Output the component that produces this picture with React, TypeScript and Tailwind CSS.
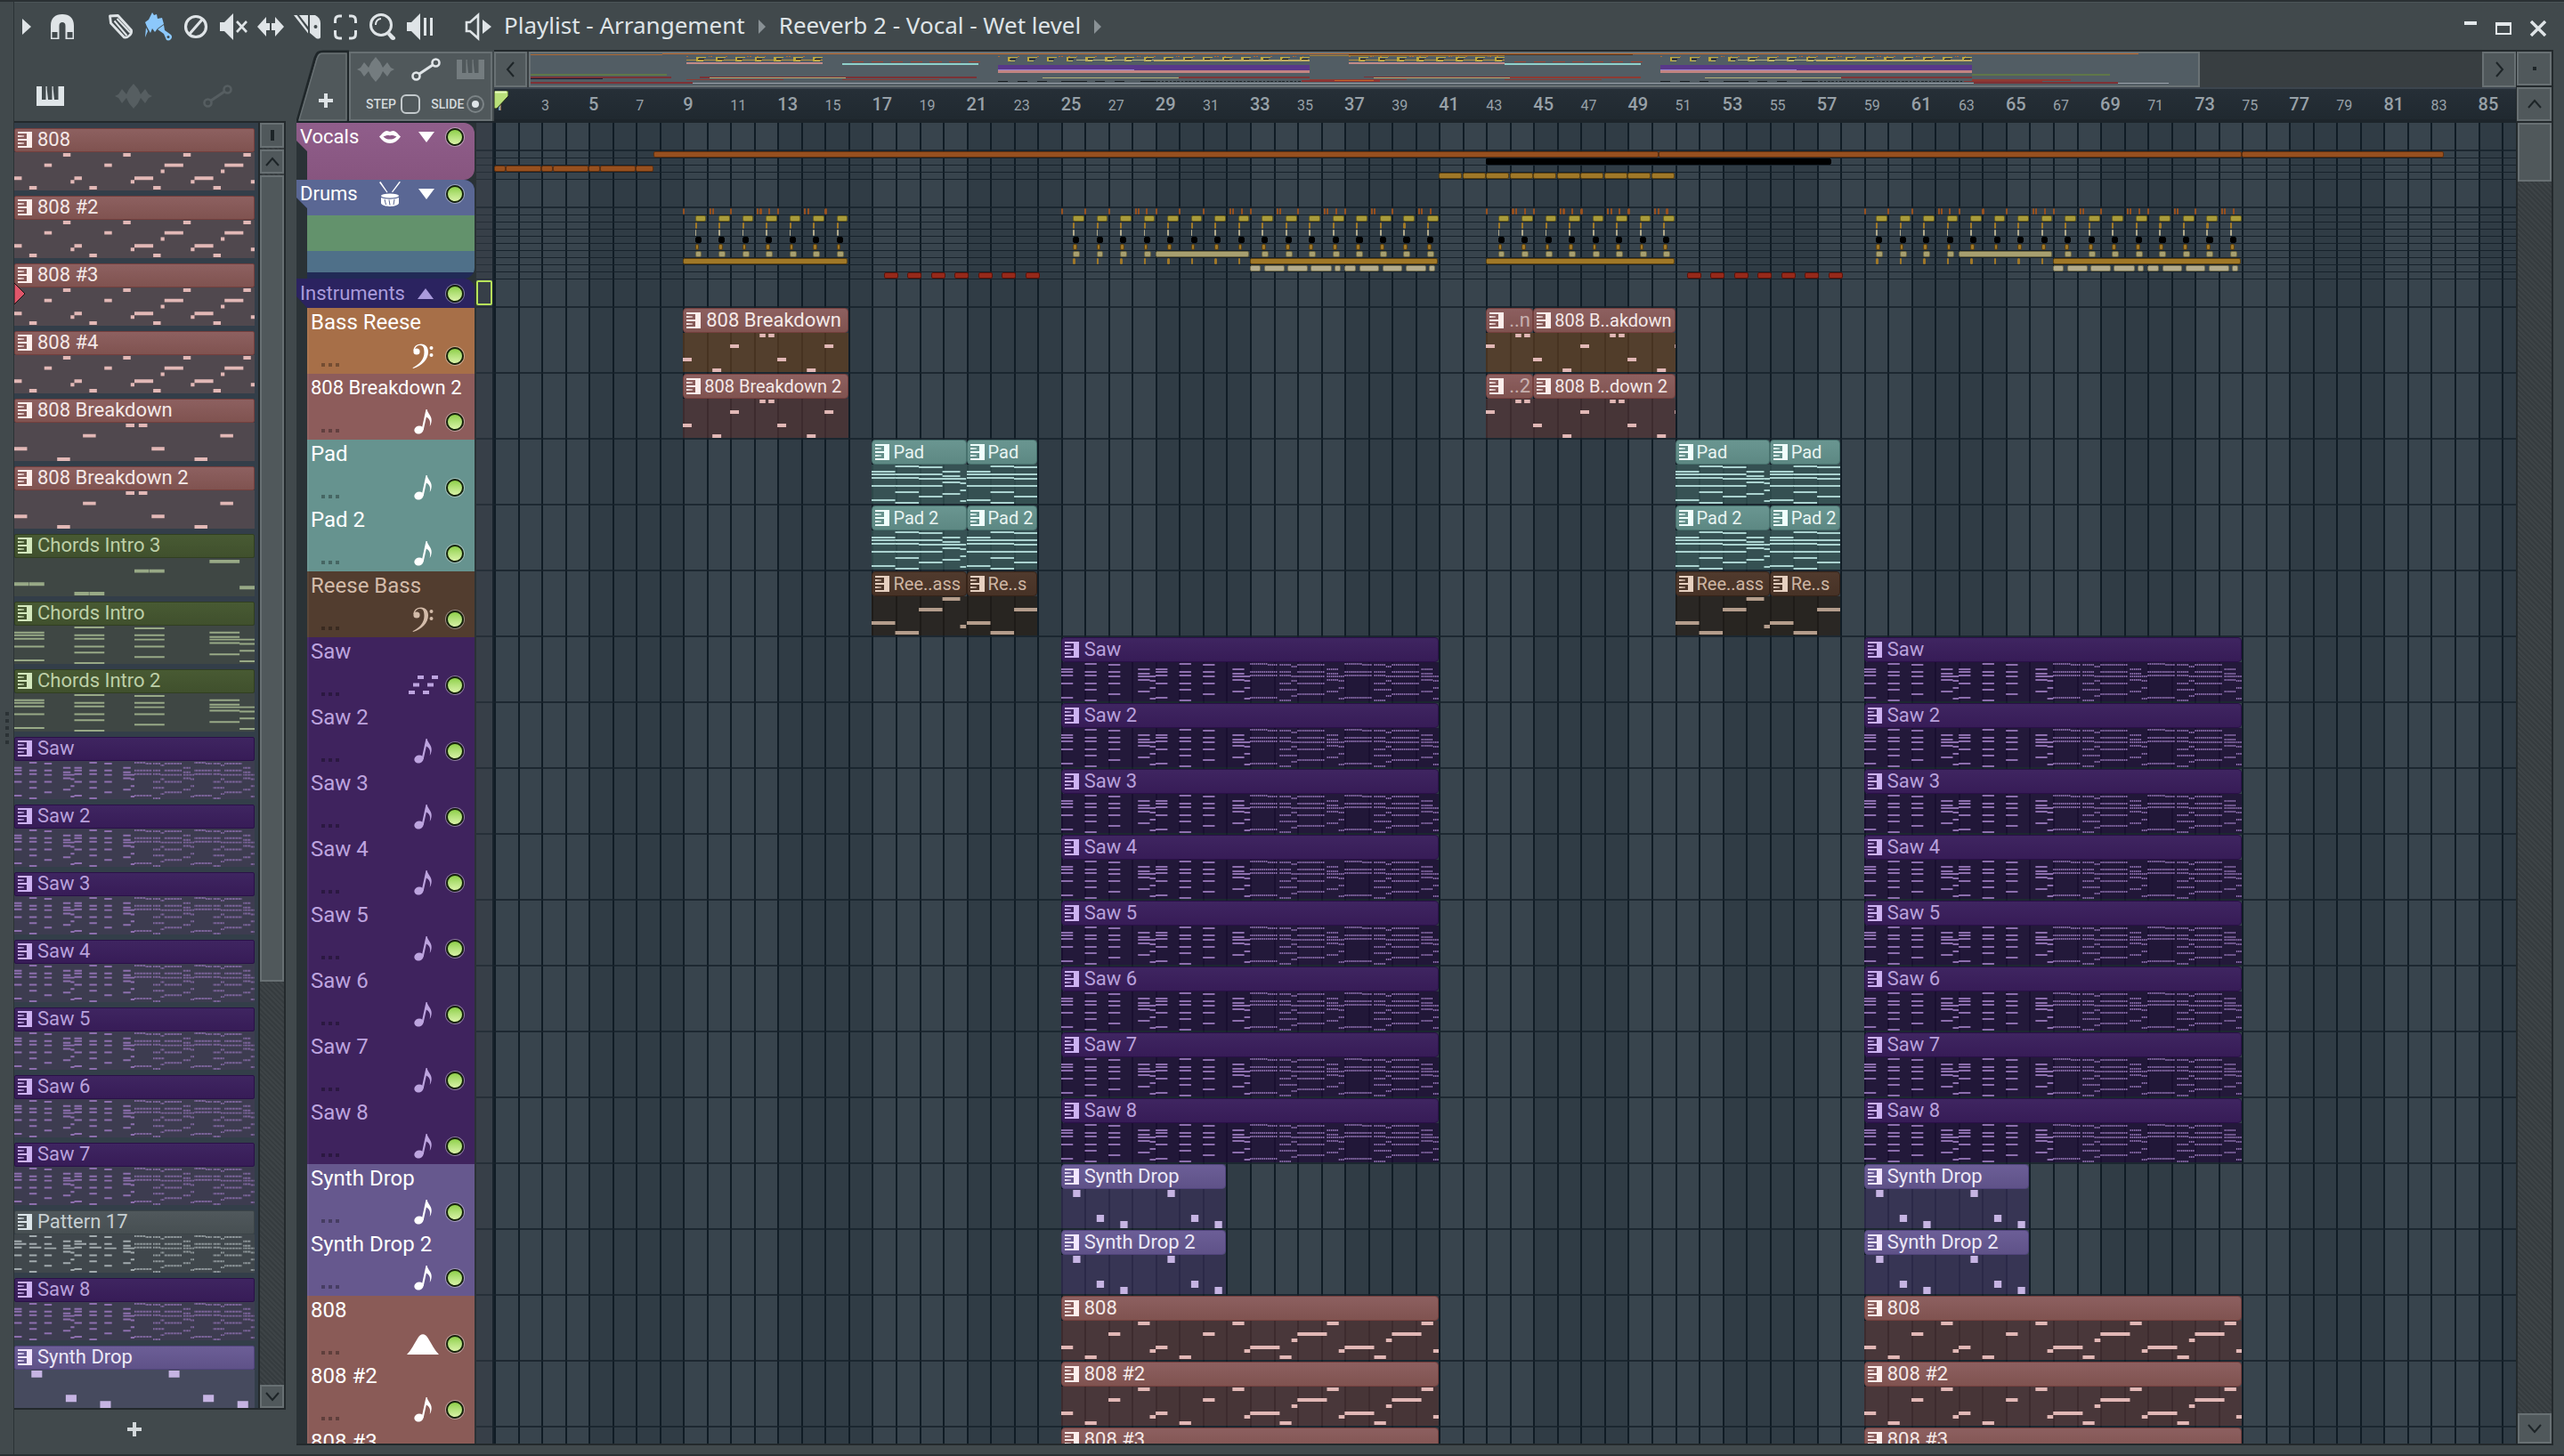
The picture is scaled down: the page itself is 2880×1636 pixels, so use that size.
import React from "react";

/* ---------- note patterns: [start, length, y, height] in quarter bars and pixels ---------- */
type Note = [number, number, number, number];

const BODY = 44;
const TOTAL_BARS = 85.6;

const at = (starts: [number, number][], y: number, h: number): Note[] =>
  starts.map(([s, l]) => [s, l, y, h]);

const bass808: Note[] = [
  ...at([[13, 2], [29, 2], [45, 2], [61, 2]], 1, 4),
  ...at([[8, 2], [24, 2], [40, 5], [56, 5]], 13, 4),
  ...at([[39, 1], [55, 1]], 20, 4),
  ...at([[0, 2], [16, 2], [32, 5], [48, 5]], 28, 4),
  ...at([[15, 1], [31, 1], [47, 1], [63, 1]], 32, 4),
  ...at([[4, 2], [20, 2], [37, 2], [53, 2]], 39, 4),
];

const breakdown: Note[] = [
  ...at([[13, 1], [14.5, 1]], 1, 4),
  ...at([[8, 1.5], [24, 1.5]], 13, 4),
  ...at([[0, 1.5], [16, 1.5]], 28, 4),
  ...at([[5, 1.5], [21, 1.5]], 40, 4),
];

const chordA = [7, 10, 14, 23, 39];
const chordB = [1, 10, 14, 23, 30, 42];
const chordC = [2, 10, 15, 23, 35];
const chordD = [7, 12, 15, 19, 32];
const chordE = [15, 20, 28, 40];

const chord = (ys: number[], s: number, l: number, h = 2): Note[] =>
  ys.map((y) => [s, l, y, h]);

const dashes = (ys: number[], s: number, l: number): Note[] => {
  const out: Note[] = [];
  for (const y of ys)
    for (let x = s; x < s + l - 0.1; x += 0.333) out.push([x, 0.22, y, 2]);
  return out;
};

const pad: Note[] = [
  ...chord(chordA, 0, 4),
  ...chord(chordB, 4, 4),
  ...chord(chordC, 8, 4),
  ...chord(chordD, 12, 3),
  ...chord(chordE, 15, 1),
];

const chords: Note[] = [
  ...chord(chordA, 0, 2),
  ...chord(chordB, 4, 2),
  ...chord(chordC, 8, 2),
  ...chord(chordD, 13, 2),
  ...chord(chordE, 15, 1),
];

const chordRoots: Note[] = [
  [0, 0.97, 28, 4], [1, 1, 28, 4], [4, 0.97, 39, 4], [5, 1, 39, 4],
  [8, 0.97, 13, 4], [9, 1, 13, 4], [13, 2, 2, 4], [15, 1, 32, 4],
];

const reese: Note[] = [
  [0, 4, 28, 4], [4, 4, 39, 4], [8, 4, 13, 4], [12, 3, 1, 4], [15, 1, 32, 4],
];

const saw: Note[] = [
  ...[0, 16].flatMap((o) => [
    ...chord(chordA, o, 2),
    ...chord(chordB, o + 4, 2),
    ...chord(chordC, o + 8, 2),
    ...chord(chordD, o + 13, 2),
    ...chord(chordE, o + 15, 1),
  ]),
  ...[32, 48].flatMap((o) => [
    ...dashes([1], o, 3),
    ...dashes([2], o + 3, 1.5),
    ...dashes([10, 14, 39], o, 4.5),
    ...dashes([2, 10, 14, 23, 42], o + 5, 2),
    ...dashes([30], o + 5, 3),
    ...dashes([4, 15, 20, 37], o + 7, 1),
    ...dashes([2, 10, 15, 23, 35], o + 8, 4.5),
    ...dashes(chordD, o + 13, 2),
    ...dashes(chordE, o + 15, 1),
  ]),
];

const pattern17: Note[] = [
  ...saw,
  [0, 3.2, 10, 2], [16, 3.2, 10, 2], [4, 3.2, 14, 2], [20, 3.2, 14, 2], [8, 3.2, 15, 2], [24, 3.2, 15, 2],
];

const synth: Note[] = [
  ...at([[2, 1.25], [18, 1.25]], 1, 8),
  ...at([[6, 1.25], [22, 1.25]], 29, 8),
  ...at([[10, 1.25], [26, 1.25]], 36, 8),
];

const toPath = (notes: Note[]) =>
  notes.map(([x, w, y, h]) => `M${x.toFixed(2)} ${y}h${w}v${h}h-${w}z`).join("");

const P = {
  bass808: toPath(bass808),
  breakdown: toPath(breakdown),
  pad: toPath(pad),
  chords: toPath(chords),
  roots: toPath(chordRoots),
  reese: toPath(reese),
  saw: toPath(saw),
  p17: toPath(pattern17),
  synth: toPath(synth),
};

function Notes({ d, from = 0, span, className }: { d: string; from?: number; span: number; className: string }) {
  return (
    <svg className={`block h-full w-full ${className}`} viewBox={`${from} 0 ${span} ${BODY}`} preserveAspectRatio="none" aria-hidden="true">
      <path d={d} fill="currentColor" />
    </svg>
  );
}

/* ---------- icons ---------- */
const Svg = ({ box, className, children }: { box: string; className: string; children: React.ReactNode }) => (
  <svg viewBox={box} className={`shrink-0 ${className}`} fill="currentColor" aria-hidden="true">
    {children}
  </svg>
);

const ClipIcon = ({ className }: { className: string }) => (
  <Svg box="0 0 16 18" className={`h-[18px] w-4 ${className}`}>
    <path d="M0 0h16v18H0v-2h10v-6H0V8h10V2H0z" />
    <path d="M0 4l7 .6v1L0 6zM0 12l7 .6v1L0 14z" />
  </Svg>
);

const PianoIcon = ({ className }: { className: string }) => (
  <Svg box="0 0 31 22" className={className}>
    <path d="M0 0h6v15h4.500V0h1.200v3L13 15h4.500V0h1.200v3L20 15h4.500V0H31v22H0z" />
  </Svg>
);

const WaveIcon = ({ className }: { className: string }) => (
  <Svg box="0 0 42 28" className={className}>
    <path d="M0 14l4-2 4-6 5 6 3-6L21 0l5 6 3 6 5-6 4 6 4 2-4 2-4 6-5-6-3 6-5 6-5-6-3-6-5 6-4-6z" />
  </Svg>
);

const LinkIcon = ({ className }: { className: string }) => (
  <Svg box="0 0 33 26" className={className}>
    <g fill="none" stroke="currentColor" strokeWidth="2.600">
      <circle cx="5.500" cy="20.500" r="4" />
      <circle cx="27.500" cy="5.500" r="4" />
      <path d="M9 18L24 8" strokeWidth="3.200" />
    </g>
  </Svg>
);

const NoteIcon = () => (
  <Svg box="0 0 20 28" className="h-7 w-5">
    <ellipse cx="5.500" cy="23" rx="5.200" ry="4.400" transform="rotate(-20 5.500 23)" />
    <path d="M8.500 23L13.500 0h1.200c.2 4 5.300 7 5 12.500-.1 3-1 5-2 6.500 1-4.500.5-8-3.800-10.500L10.700 23z" />
  </Svg>
);

const ClefIcon = () => (
  <Svg box="0 0 24 28" className="h-7 w-6">
    <circle cx="5" cy="9" r="3.600" />
    <path d="M1.400 8C1.500 3.500 5 .5 10 .5c5 0 8 3.500 8 9C18 18 11 25 1 28l-.5-.8C8 23.500 13.500 18 13.500 10 13.500 5 12.500 2 9 2 6 2 3.200 4 3 7.500z" />
    <circle cx="21.500" cy="5" r="2" />
    <circle cx="21.500" cy="13" r="2" />
  </Svg>
);

const StepsIcon = () => (
  <Svg box="0 0 33 22" className="h-[22px] w-[33px]">
    <path d="M10 0h7v4h-7zM26 0h7v4h-7zM5 8.500h7v4H5zM21 8.500h7v4h-7zM0 17h7v4H0zM16 17h7v4h-7z" />
  </Svg>
);

const HillIcon = () => (
  <Svg box="0 0 36 23" className="h-[23px] w-9">
    <path d="M0 23C5 18 8 11 12 5c3-6.500 9-6.500 12 0 4 6 7 13 12 18z" />
  </Svg>
);

const LipsIcon = () => (
  <Svg box="0 0 24 14" className="h-[14px] w-6">
    <path fillRule="evenodd" d="M0 6.500C3 4 5 0 8.500 0 10 0 11 1 12 1s2-1 3.500-1C19 0 21 4 24 6.500 21 11 17 14 12 14S3 11 0 6.500zM4.500 6.500C7 9 9 9.500 12 9.500s5-.5 7.500-3C17 5.500 14 4.500 12 5.500 10 4.500 7 5.500 4.500 6.500z" />
  </Svg>
);

const DrumIcon = () => (
  <Svg box="0 0 24 28" className="h-7 w-6">
    <path d="M0 1l1.500-1 8 12-1 .6zM24 .5L22.500 0 14 11.500l1 .7z" />
    <ellipse cx="12" cy="16" rx="10" ry="2.400" />
    <path d="M2 18c5 2.300 15 2.300 20 0v6.500C20 29 4 29 2 24.500z" />
    <path d="M6 20l1.500 6M11 20.500l1 6M17 20l-1 6" stroke="#5a6691" strokeWidth="1" />
  </Svg>
);

const tools: { name: string; on?: boolean; art: React.ReactNode }[] = [
  { name: "Draw", art: <g fill="none" stroke="currentColor" strokeWidth="2.800" strokeLinejoin="round"><path d="M3.500 4l9-.5L27.500 20c1 4-4 9-8 8L4.500 12z" /><path d="M8.500 9.500L22.500 26M11.500 7L26 22.500" strokeWidth="2" /></g> },
  { name: "Paint", on: true, art: <><path d="M9 0L5 8 1 11l2 5 4 7 2-5 3 4 3-4 7-5-2-7-5 1-1-5-3 1z" /><path d="M2 17l-1 11 3-7z" /><path d="M15 19l7-5 1 6 7 5c3 3-1 8-5 6l-3-7z" /><circle cx="27" cy="27.500" r="1.500" fill="#41494c" /></> },
  { name: "Delete", art: <g fill="none" stroke="currentColor" strokeWidth="3.200"><circle cx="16" cy="16" r="11.500" /><path d="M9 24L23 8" /></g> },
  { name: "Mute", art: <><path d="M1 11h5L16 1v30L6 21H1z" /><path d="M20 10l11 12M31 10L20 22" stroke="currentColor" strokeWidth="2.600" /></> },
  { name: "Slip", art: <path d="M1 16L11 5v7h10V5l10 11-10 11v-7H11v7zM15 12v8h2v-8z" fillRule="evenodd" /> },
  { name: "Slice", art: <path fillRule="evenodd" d="M0 3h3.500L16 20v3.500zM6 3h10v13zM18 3h6c4 2 6 5 6 9v16c-1 2-4 2-6 0l-6-5zM24.500 14a2 2 0 100 4 2 2 0 000-4z" /> },
  { name: "Select", art: <path fill="none" stroke="currentColor" strokeWidth="3" d="M12 4H9c-3 0-4.500 2-4.500 5v3M20 4h3c3 0 4.500 2 4.500 5v3M12 29H9c-3 0-4.500-2-4.500-5v-4M20 29h3c3 0 4.500-2 4.500-5v-4" /> },
  { name: "Zoom", art: <><g fill="none" stroke="currentColor"><circle cx="14" cy="14" r="11.500" strokeWidth="3" /><path d="M8 14c0-4 2-6.500 6-7" strokeWidth="2" /></g><path d="M21 25l3-3 6 6c1 3-3 4-5 2z" /></> },
  { name: "Playback", art: <><path d="M1 11h5L16 1v30L6 21H1z" /><path d="M20 6h3v20h-3zM27 6h3v20h-3z" /></> },
];

const Chevron = ({ dir }: { dir: "up" | "down" | "left" | "right" }) => {
  const d = { up: "M3 14l7-8 7 8", down: "M3 6l7 8 7-8", left: "M13 2l-7 8 7 8", right: "M7 2l7 8-7 8" }[dir];
  return (
    <svg viewBox="0 0 20 20" className="h-5 w-5" fill="none" stroke="#1d2427" strokeWidth="2" aria-hidden="true">
      <path d={d} />
    </svg>
  );
};

const scrollBtn = "flex shrink-0 items-center justify-center border-2 border-[#687073] bg-[#50585b]";
const hatch = "bg-[repeating-linear-gradient(45deg,#363c3f_0px,#363c3f_2px,#3d4346_2px,#3d4346_4px)]";

/* ---------- palettes ---------- */
type Skin = { head: string; text: string; icon: string; note: string; body: string; side: string };
const skins: Record<string, Skin> = {
  red: { head: "bg-linear-to-b from-[#8d6060] to-[#805350] border-[#743f3d]", text: "text-[#f4e9e8]", icon: "text-[#fdeeec]", note: "text-[#e2b8b6]", body: "bg-[#513232]/70", side: "bg-[#50484e]" },
  rust: { head: "bg-linear-to-b from-[#8d6060] to-[#805350] border-[#743f3d]", text: "text-[#f4e9e8]", icon: "text-[#fdeeec]", note: "text-[#e2b8b6]", body: "bg-[#5f3d1f]/70", side: "bg-[#50484e]" },
  teal: { head: "bg-linear-to-b from-[#6a9691] to-[#5d8883] border-[#47716d]", text: "text-[#e8f4f2]", icon: "text-[#f0fffd]", note: "text-[#abd3d0]", body: "bg-[#375757]/75", side: "bg-[#375757]" },
  brown: { head: "bg-linear-to-b from-[#503a2d] to-[#473226] border-[#362318]", text: "text-[#cdb5a3]", icon: "text-[#e6d0c0]", note: "text-[#b49d8c]", body: "bg-[#251b13]/70", side: "bg-[#251b13]" },
  purple: { head: "bg-linear-to-b from-[#3f2561] to-[#371c57] border-[#2a1048]", text: "text-[#b9a1dc]", icon: "text-[#cdb2f2]", note: "text-[#8d6fae]", body: "bg-[#1c0b34]/75", side: "bg-[#3d3c50]" },
  violet: { head: "bg-linear-to-b from-[#6c5e97] to-[#5f5288] border-[#51447c]", text: "text-[#ece8f7]", icon: "text-[#f2e6ff]", note: "text-[#c6b4e3]", body: "bg-[#372f57]/70", side: "bg-[#464a5e]" },
  green: { head: "bg-linear-to-b from-[#485a33] to-[#40502d] border-[#313f20]", text: "text-[#bdcfa8]", icon: "text-[#d3e8bd]", note: "text-[#98a986]", body: "bg-[#3f4744]", side: "bg-[#3f4744]" },
  grey: { head: "bg-linear-to-b from-[#50585c] to-[#474f52] border-[#3c4447]", text: "text-[#c7cfd2]", icon: "text-[#dbe5e9]", note: "text-[#a2abae]", body: "bg-[#40474c]", side: "bg-[#40474c]" },
};

/* ---------- pattern list ---------- */
const sidebar: [string, string, string, number][] = [
  ["808", "red", P.bass808, 64],
  ["808 #2", "red", P.bass808, 64],
  ["808 #3", "red", P.bass808, 64],
  ["808 #4", "red", P.bass808, 64],
  ["808 Breakdown", "red", P.breakdown, 28],
  ["808 Breakdown 2", "red", P.breakdown, 28],
  ["Chords Intro 3", "green", P.roots, 16],
  ["Chords Intro", "green", P.chords, 16],
  ["Chords Intro 2", "green", P.chords, 16],
  ["Saw", "purple", P.saw, 64],
  ["Saw 2", "purple", P.saw, 64],
  ["Saw 3", "purple", P.saw, 64],
  ["Saw 4", "purple", P.saw, 64],
  ["Saw 5", "purple", P.saw, 64],
  ["Saw 6", "purple", P.saw, 64],
  ["Saw 7", "purple", P.saw, 64],
  ["Pattern 17", "grey", P.p17, 64],
  ["Saw 8", "purple", P.saw, 64],
  ["Synth Drop", "violet", P.synth, 28],
];

function PatternList() {
  return (
    <ul className="min-w-0 flex-1 overflow-hidden bg-[#333e49] pt-1.5 pr-1">
      {sidebar.map(([name, skin, d, span], i) => (
        <li key={name} className="relative mb-1.5 h-[70px]">
          <button className={`flex h-[27px] w-full items-center gap-1.5 rounded-xs border pb-px pl-[3px] text-[22px] leading-[22px] ${skins[skin].head} ${skins[skin].text}`}>
            <ClipIcon className={skins[skin].icon} />
            <span>{name}</span>
          </button>
          <div className={`h-[43px] ${skins[skin].side}`}>
            <Notes d={d} span={span} className={skins[skin].note} />
          </div>
          {i === 2 && (
            <svg viewBox="0 0 13 24" className="absolute top-[22px] left-0 h-6 w-[13px]" aria-hidden="true">
              <path d="M0 0l12 12L0 24z" fill="#e0566a" stroke="#1d1113" strokeWidth="1" />
            </svg>
          )}
        </li>
      ))}
    </ul>
  );
}

function Sidebar() {
  return (
    <aside className="flex w-[305px] shrink-0 flex-col">
      <div className="flex h-20 items-center gap-[57px] pt-6 pl-[25px]">
        <button aria-label="Patterns" className="text-[#dfe5e8]"><PianoIcon className="h-[22px] w-[31px]" /></button>
        <button aria-label="Audio" className="text-[#565e61]"><WaveIcon className="h-7 w-[42px]" /></button>
        <button aria-label="Automation" className="text-[#565e61]"><LinkIcon className="h-[26px] w-[33px]" /></button>
      </div>
      <div className="flex min-h-0 flex-1 border-y-2 border-[#23292c]">
        <PatternList />
        <div className={`flex w-[31px] flex-col gap-0.5 border-x-2 border-[#23292c] ${hatch}`}>
          <button aria-label="Options" className={`${scrollBtn} h-7`}><span className="h-3 w-1 bg-[#1d2427]" /></button>
          <button aria-label="Scroll up" className={`${scrollBtn} h-[27px]`}><Chevron dir="up" /></button>
          <div className={`${scrollBtn} h-[906px] shrink`} />
          <button aria-label="Scroll down" className={`${scrollBtn} mt-auto h-[26px]`}><Chevron dir="down" /></button>
        </div>
      </div>
      <button aria-label="Add pattern" className="flex h-[50px] w-[270px] items-center justify-center text-[#d3d8db]">
        <Svg box="0 0 16 16" className="mb-1.5 h-4 w-4"><path d="M6 0h4v6h6v4h-6v6H6v-6H0V6h6z" /></Svg>
      </button>
    </aside>
  );
}

/* ---------- timeline rows ---------- */
type Clip = { bar: number; len: number; name: string; skin: string; d: string; from?: number; small?: boolean; faded?: boolean };
type Track = { name: string; bg: string; text: string; icon: React.ReactNode; clips: Clip[]; small?: boolean };

const twice = (len: number, name: string, skin: string, d: string): Clip[] => [
  { bar: 25, len, name, skin, d },
  { bar: 59, len, name, skin, d },
];
const pads = (a: string, b: string, skin: string, d: string): Clip[] =>
  [17, 51].flatMap((bar) => [
    { bar, len: 4, name: a, skin, d, small: true },
    { bar: bar + 4, len: 3, name: b, skin, d, small: true },
  ]);

const tracks: Track[] = [
  { name: "Bass Reese", bg: "bg-[#a76f48]", text: "text-white", icon: <ClefIcon />, clips: [
    { bar: 9, len: 7, name: "808 Breakdown", skin: "rust", d: P.breakdown },
    { bar: 43, len: 2, name: "..n", skin: "rust", d: P.breakdown, from: 8, faded: true },
    { bar: 45, len: 6, name: "808 B..akdown", skin: "rust", d: P.breakdown, small: true },
  ] },
  { name: "808 Breakdown 2", bg: "bg-[#8d5c5b]", text: "text-white", icon: <NoteIcon />, small: true, clips: [
    { bar: 9, len: 7, name: "808 Breakdown 2", skin: "red", d: P.breakdown, small: true },
    { bar: 43, len: 2, name: "..2", skin: "red", d: P.breakdown, from: 8, faded: true },
    { bar: 45, len: 6, name: "808 B..down 2", skin: "red", d: P.breakdown, small: true },
  ] },
  { name: "Pad", bg: "bg-[#66938f]", text: "text-white", icon: <NoteIcon />, clips: pads("Pad", "Pad", "teal", P.pad) },
  { name: "Pad 2", bg: "bg-[#66938f]", text: "text-white", icon: <NoteIcon />, clips: pads("Pad 2", "Pad 2", "teal", P.pad) },
  { name: "Reese Bass", bg: "bg-[#523d2f]", text: "text-[#d3bba9]", icon: <ClefIcon />, clips: pads("Ree..ass", "Re..s", "brown", P.reese) },
  ...["Saw", "Saw 2", "Saw 3", "Saw 4", "Saw 5", "Saw 6", "Saw 7", "Saw 8"].map((name) => ({
    name, bg: "bg-[#3f235e]", text: "text-[#bda4df]", icon: name === "Saw" ? <StepsIcon /> : <NoteIcon />, clips: twice(16, name, "purple", P.saw),
  })),
  ...["Synth Drop", "Synth Drop 2"].map((name) => ({
    name, bg: "bg-[#66588e]", text: "text-white", icon: <NoteIcon />, clips: twice(7, name, "violet", P.synth),
  })),
  ...["808", "808 #2", "808 #3"].map((name) => ({
    name, bg: "bg-[#8a5b57]", text: "text-white", icon: name === "808" ? <HillIcon /> : <NoteIcon />, clips: twice(16, name, "red", P.bass808),
  })),
];

type Mini = [number, number, string];
const orange = "bg-[#97501f] border-[#5f2f0e]";
const amber = "bg-[#a07828] border-[#5b4110]";
const lime = "bg-[#a89b3c] border-[#6a5f1c]";
const cream = "bg-[#a8a070] border-[#6c6642]";
const bone = "bg-[#b3ac8e] border-[#77714f]";
const crimson = "bg-[#96291a] border-[#5c130a]";
const black = "bg-black border-black";

const seq = (from: number, count: number) => Array.from({ length: count }, (_, i) => from + i + 0.5);
const beats = [...seq(9, 7), ...seq(25, 16), ...seq(43, 8), ...seq(59, 16)];
const each = (list: number[], w: number, c: string): Mini[] => list.map((b) => [b, w, c]);
const ticks16 = [0, 1, 2, 3.12, 3.24, 3.6, 4, 5, 6, 7.12, 7.25, 7.62, 8, 9.12, 9.25, 10, 11.12, 11.25, 11.62, 12, 13.12, 13.25, 14, 15.12, 15.25, 15.62];
const ticks = [
  ...[0, 1.12, 1.24, 2, 3.12, 3.25, 3.62, 4, 5.12, 5.25, 6].map((t) => t + 9),
  ...ticks16.map((t) => t + 25),
  ...[0, 1.1, 1.23, 1.62, 2, 3.12, 3.25, 3.62, 4, 5.12, 5.25, 5.62, 6, 7.12, 7.25, 7.62].map((t) => t + 43),
  ...ticks16.map((t) => t + 59),
];
const boneSegs = [[0, 0.47], [0.6, 0.88], [1.6, 0.86], [2.55, 0.93], [3.57, 0.29], [3.98, 0.52], [4.63, 0.85], [5.6, 0.86], [6.58, 0.89], [7.58, 0.27]];

const vocalLanes: Mini[][] = [
  [[7.75, 42.55, orange], [50.3, 24.7, orange], [75, 8.55, orange]],
  [[43, 14.6, black]],
  [[1, 0.48, orange], [1.5, 1.5, orange], [3, 0.48, orange], [3.5, 1.5, orange], [5, 0.48, orange], [5.5, 1.5, orange], [7, 0.75, orange]],
  Array.from({ length: 10 }, (_, i): Mini => [41 + i, 0.98, amber]),
];

const drumLanes: Mini[][] = [
  each(ticks, 0.08, orange),
  each(beats, 0.48, lime),
  each(beats, 0.08, amber),
  each(beats, 0.07, bone),
  each(beats, 0.27, black),
  each(beats, 0.18, amber),
  [...each(beats.filter((b) => !((b > 29 && b < 33) || (b > 63 && b < 67))), 0.3, cream), [29, 3.97, cream], [63, 3.97, cream]],
  [...each([...seq(25, 8), ...seq(59, 8)], 0.1, amber), [9, 6.98, amber], [33, 7.97, amber], [43, 7.97, amber], [67, 7.97, amber]],
  [33, 67].flatMap((b) => boneSegs.map(([s, l]): Mini => [b + s, l, bone])),
  each([...seq(17, 7), ...seq(51, 7)], 0.6, crimson),
];

const pos = (bar: number, len: number) => ({
  left: `${((bar - 1) / TOTAL_BARS) * 100}%`,
  width: `${(len / TOTAL_BARS) * 100}%`,
});

const laneLine = "border-b-2 border-[#17222b]/80";

function MiniLane({ items }: { items: Mini[] }) {
  return (
    <div className="relative h-2 shrink-0 border-b border-[#17222b]">
      {items.map(([bar, len, color], i) => (
        <div key={i} className={`absolute top-0 h-[7px] rounded-xs ${len < 0.15 ? "" : "border"} ${color}`} style={pos(bar, len)} />
      ))}
    </div>
  );
}

function ClipView({ clip }: { clip: Clip }) {
  const s = skins[clip.skin];
  return (
    <div className="absolute inset-y-0 flex flex-col overflow-hidden" style={pos(clip.bar, clip.len)}>
      <div className={`flex h-7 shrink-0 items-center overflow-hidden rounded border pb-px pl-[3px] whitespace-nowrap ${clip.small ? "gap-1 text-[20px] leading-[22px]" : "gap-1.5 text-[22px] leading-[22px]"} ${s.head} ${s.text}`}>
        <ClipIcon className={s.icon} />
        <span className={clip.faded ? "opacity-60" : ""}>{clip.name}</span>
      </div>
      <div className={`min-h-0 flex-1 ${s.body}`}>
        <Notes d={clip.d} from={clip.from} span={clip.len * 4} className={s.note} />
      </div>
    </div>
  );
}

const bars = Array.from({ length: 86 }, (_, i) => i + 1);
const barCols = "grid grid-cols-[repeat(85,minmax(0,1fr))_minmax(0,0.6fr)]";

function Lanes() {
  return (
    <div className="relative flex min-w-0 flex-1 flex-col overflow-hidden">
      <div className={`absolute inset-0 ${barCols}`}>
        {bars.map((b) => (
          <div key={b} className={`border-l-2 border-[#101c25] ${Math.floor((b - 1) / 4) % 2 ? "bg-[#303c45]" : "bg-[#38444d]"}`} />
        ))}
      </div>
      <div className={`relative h-8 shrink-0 ${laneLine}`} />
      {vocalLanes.map((l, i) => <MiniLane key={i} items={l} />)}
      <div className={`relative h-8 shrink-0 ${laneLine}`} />
      {drumLanes.map((l, i) => <MiniLane key={i} items={l} />)}
      <div className={`relative h-8 shrink-0 ${laneLine}`} />
      {tracks.map((t) => (
        <div key={t.name} className={`relative h-[74px] shrink-0 ${laneLine}`}>
          {t.clips.map((c, i) => <ClipView key={i} clip={c} />)}
        </div>
      ))}
    </div>
  );
}

const Led = ({ label }: { label: string }) => (
  <button
    aria-label={`Mute ${label}`}
    className="size-5 shrink-0 rounded-full border-2 border-[#16240c] bg-linear-to-b from-[#8fd049] to-[#d9f3a6] ring-1 ring-white/40"
  />
);

const groupHead = "flex h-[31px] items-center pl-1 pr-3 text-[22px] leading-[22px]";

function TrackHeaders() {
  return (
    <div className="flex w-[202px] shrink-0 flex-col overflow-hidden bg-[#2a3236] pr-0.5">
      <section className="h-16 shrink-0 overflow-hidden rounded-r-xl bg-linear-to-b from-[#905e8b] to-[#87557f] text-white [clip-path:polygon(0_0,100%_0,100%_100%,12px_100%,12px_32px,0_20px)]">
        <div className={groupHead}>
          <span className="w-[89px]">Vocals</span>
          <LipsIcon />
          <Svg box="0 0 18 12" className="mr-auto ml-5 h-3 w-[18px]"><path d="M0 0h18L9 12z" /></Svg>
          <Led label="Vocals" />
        </div>
      </section>
      <section className="h-[111px] shrink-0 overflow-hidden rounded-r-xl bg-[#212a56] text-white [clip-path:polygon(0_0,100%_0,100%_100%,12px_100%,12px_32px,0_20px)]">
        <div className="h-10 bg-[#5a6794]">
          <div className={groupHead}>
            <span className="w-[89px]">Drums</span>
            <DrumIcon />
            <Svg box="0 0 18 12" className="mr-auto ml-5 h-3 w-[18px]"><path d="M0 0h18L9 12z" /></Svg>
            <Led label="Drums" />
          </div>
        </div>
        <div className="h-10 bg-[#63926c]" />
        <div className="h-6 bg-[#4f7089]" />
      </section>
      <section className={`${groupHead} h-[33px] shrink-0 rounded-tr-xl bg-[#2b2360] text-[#a99bdc] [clip-path:polygon(0_0,100%_0,100%_100%,12px_100%,0_20px)]`}>
        <span>Instruments</span>
        <Svg box="0 0 18 12" className="mr-3.5 ml-auto h-3 w-[18px]"><path d="M0 12h18L9 0z" /></Svg>
        <Led label="Instruments" />
      </section>
      {tracks.map((t) => (
        <section key={t.name} className={`ml-3 flex h-[74px] shrink-0 flex-col justify-between border-l-2 border-white/5 pt-1 pb-1 pl-0.5 ${t.bg} ${t.text}`}>
          <div className={`whitespace-nowrap ${t.small ? "text-[22px] leading-6" : "text-[24px] leading-6"}`}>{t.name}</div>
          <div className="flex h-8 items-center pr-3">
            <div className="mt-5 ml-3 flex gap-1 opacity-30">
              <i className="size-1 bg-black" /><i className="size-1 bg-black" /><i className="size-1 bg-black" />
            </div>
            <div className="mr-2 ml-auto flex w-9 justify-center">{t.icon}</div>
            <Led label={t.name} />
          </div>
        </section>
      ))}
    </div>
  );
}

function MarkerColumn() {
  const line = "shrink-0 border-b-2 border-[#262f38]";
  return (
    <div className="flex w-5 shrink-0 flex-col overflow-hidden border-r-2 border-[#17222b] bg-[#373f48]">
      <div className={`h-8 ${line}`} />
      {vocalLanes.map((_, i) => <div key={i} className="h-2 shrink-0 border-b border-[#262f38]" />)}
      <div className={`h-8 ${line}`} />
      {drumLanes.map((_, i) => <div key={i} className="h-2 shrink-0 border-b border-[#262f38]" />)}
      <div className={`h-8 ${line} py-px`}><div className="h-full rounded-xs border-2 border-[#b7e45a]" /></div>
      {tracks.map((t) => <div key={t.name} className={`h-[74px] ${line}`} />)}
    </div>
  );
}

/* ---------- overview strip: [bar, length, y, height, colour] ---------- */
type Strip = [number, number, number, number, string];
const section25 = (b: number): Strip[] => [
  [b, 16, 13, 6, "#58378a"], [b, 7, 18, 1, "#9a84cf"], [b, 16, 19, 3, "#c28482"],
  [b + 2.3, 7, 27, 1, "#b3b079"], [b + 9.3, 6.7, 26, 2, "#7e3638"],
  [b + 4, 4, 7, 1, "#b3b079"], [b + 8, 8, 7, 2, "#c0ab62"],
  ...[[0, 0.5], [1, 0.5], [2, 0.5], [3.25, 1.3], [5, 0.5], [6, 0.5], [7.3, 0.7]].map(([s, l]): Strip => [b + s, l, 31, 1, "#1b2024"]),
  ...Array.from({ length: 40 }, (_, i): Strip => [b + 8 + i * 0.2, 0.12, 31, 1, "#23292d"]),
];
const strips: Strip[] = [
  [1, 6.75, 1, 1, "#b06a34"], [7.75, 75.8, 0, 1, "#c06a2c"], [43, 14.6, 1, 1, "#4a2f1c"],
  [41, 10, 2, 1, "#a88035"],
  [9, 7, 7, 1, "#b5913a"], [9, 7, 10, 2, "#c08a89"], [43, 8, 7, 1, "#b5913a"], [43, 8, 10, 2, "#c08a89"],
  [17, 7, 11, 2, "#8fd0cb"], [51, 7, 11, 2, "#8fd0cb"],
  ...[...seq(17, 7), ...seq(51, 7)].map((b): Strip => [b, 0.6, 9, 1, "#a34330"]),
  ...beats.flatMap((b): Strip[] => [[b, 0.5, 4, 1, "#bfa93c"], [b, 0.12, 4, 5, "#bfa93c"], [b + 0.1, 0.3, 6, 1, "#171a17"], [b + 0.1, 0.25, 8, 1, "#c8b956"]]),
  ...ticks.map((b): Strip => [b, 0.08, 3, 1, "#b06a34"]),
  ...section25(25), ...section25(59),
  [1, 7, 23, 2, "#5f7749"], [75, 7.1, 23, 2, "#5f7749"],
  [1, 7.2, 26, 2, "#7a3236"], [1, 3.7, 28, 1, "#1a1d33"], [9.7, 14.2, 26, 2, "#7a3236"], [10.2, 7, 27, 1, "#b3b079"],
  [9, 5, 29, 1, "#8d3b33"], [17, 5, 29, 1, "#8d3b33"], [41, 5, 29, 1, "#8d3b33"], [40.6, 4, 30, 2, "#8c3434"], [42.3, 2, 30, 1, "#c2642c"],
  [43.8, 7.5, 26, 1, "#7a3236"], [44.3, 7, 27, 1, "#b3b079"], [51.3, 6.7, 26, 2, "#8d3b33"], [51, 5, 29, 1, "#8d3b33"],
  [75, 5.1, 29, 2, "#8d3b33"], [74.6, 4, 31, 1, "#8c3434"],
  [1, 8.3, 32, 2, "#7e3135"], [9.3, 65.8, 33, 1, "#9aa2ab"], [75.1, 7.4, 32, 2, "#7e3135"], [82.5, 2.6, 33, 1, "#9aa2ab"],
];

function Overview() {
  return (
    <div className="flex h-[42px] border-t-2 border-[#22282b] bg-[#383e41]">
      <button aria-label="Scroll left" className={`${scrollBtn} h-10 w-[37px]`}><Chevron dir="left" /></button>
      <div className="ml-0.5 h-10 flex-[1876] border-2 border-[#6a7275] bg-[#525d64]">
        <svg viewBox={`0 0 ${TOTAL_BARS} 36`} preserveAspectRatio="none" className="block h-full w-full" shapeRendering="crispEdges" role="img" aria-label="Arrangement overview">
          {strips.map(([b, l, y, h, c], i) => <rect key={i} x={b - 1} y={y} width={l} height={h} fill={c} />)}
        </svg>
      </div>
      <div className="flex-[318]" />
      <button aria-label="Scroll right" className={`${scrollBtn} h-10 w-[38px]`}><Chevron dir="right" /></button>
    </div>
  );
}

function Ruler() {
  return (
    <div className="relative h-10 overflow-hidden border-t-2 border-b-4 border-t-[#3c454e] border-b-[#1d252b] bg-linear-to-b from-[#262f37] to-[#202930]">
      <div className={`h-full items-center text-[#98a1a8] ${barCols}`}>
        {bars.map((b) => (
          <span key={b} className={`h-6 overflow-visible leading-6 whitespace-nowrap ${b % 4 === 1 ? "text-[20px] font-medium" : "pt-0.5 text-[16px]"}`}>
            {b % 2 ? b : ""}
          </span>
        ))}
      </div>
      <svg viewBox="0 0 16 20" className="absolute top-0.5 left-0 h-5 w-4" aria-hidden="true">
        <path d="M0 0h16v6L3 20H0z" fill="#b9e07a" stroke="#1a2312" strokeWidth="1" />
        <path d="M1 1.500h13" stroke="#eaffc0" strokeWidth="2" />
      </svg>
    </div>
  );
}

function ArrangementTools() {
  return (
    <div className="flex w-[222px] shrink-0 border-b-2 border-[#1d252b]">
      <button aria-label="Add track" className="relative h-20 w-[59px] shrink-0">
        <svg viewBox="0 0 59 80" className="h-full w-full" aria-hidden="true">
          <path d="M1 80L21 9C23 3 25 2 30 2h28v78" fill="#50585b" stroke="#1f2629" strokeWidth="3" />
          <path d="M3 79L23 10c2-5 3-6 7-6h26v75z" fill="none" stroke="#687073" strokeWidth="1.500" />
          <path d="M31 49h4v6h6v4h-6v6h-4v-6h-6v-4h6z" fill="#dde2e5" />
        </svg>
      </button>
      <div className="mt-0.5 flex w-[161px] flex-col justify-between border-2 border-[#687073] bg-[#50585b] px-[7px] pt-1 pb-1.5">
        <div className="flex items-center justify-between text-[#747c7f]">
          <button aria-label="Audio clips"><WaveIcon className="h-7 w-[42px]" /></button>
          <button aria-label="Automation clips" className="text-[#e0e5e8]"><LinkIcon className="h-[26px] w-[33px]" /></button>
          <button aria-label="Pattern clips"><PianoIcon className="h-[22px] w-[31px]" /></button>
        </div>
        <div className="flex items-center justify-between pr-0.5 pl-2.5 text-[14px] leading-5 font-medium text-[#d5dadd]">
          <label htmlFor="step">STEP</label>
          <input id="step" type="checkbox" className="mr-2 size-[22px] appearance-none rounded-md border-2 border-[#c3c9cc]" />
          <label htmlFor="slide">SLIDE</label>
          <input id="slide" type="radio" defaultChecked className="size-4 appearance-none rounded-full border-4 border-[#50585b] bg-[#dfe5e8] ring-2 ring-[#7b8386]" />
        </div>
      </div>
    </div>
  );
}

function TitleBar() {
  const caret = "mt-1 h-4 w-2 text-[#899195]";
  return (
    <header className="flex h-[54px] shrink-0 items-center border-t border-[#4c5457] text-[#dfe4e7]">
      <button aria-label="Menu" className="ml-[9px]"><Svg box="0 0 10 18" className="h-[18px] w-2.5"><path d="M0 0l10 9-10 9z" /></Svg></button>
      <button aria-label="Snap" className="mr-5 ml-[22px]">
        <Svg box="0 0 26 28" className="h-7 w-[26px]"><path fillRule="evenodd" d="M0 28V13C0 4 5 0 13 0s13 4 13 13v15h-9.500V13c0-3-1.500-4-3.500-4s-3.500 1-3.500 4v15zM1.500 20v6.500h6V20zM18.500 20v6.500h6V20z" /></Svg>
      </button>
      <div className="ml-3 flex">
        {tools.map((t) => (
          <button key={t.name} aria-label={t.name} className={`flex w-[42px] justify-center ${t.on ? "text-[#8cc8fb]" : ""}`}>
            <Svg box="0 0 32 32" className="h-8 w-8">{t.art}</Svg>
          </button>
        ))}
      </div>
      <button aria-label="Preview" className="ml-[29px]">
        <Svg box="0 0 30 32" className="h-8 w-[30px]">
          <path d="M2 11h4L15 3v26L6 21H2z" fill="none" stroke="currentColor" strokeWidth="2.600" />
          <path d="M20 8l10 8-10 8z" />
        </Svg>
      </button>
      <nav className="mb-1 ml-3.5 flex items-center gap-[15px] font-['Noto_Sans',sans-serif] text-[26px] leading-8">
        <a href="#arrangement">Playlist - Arrangement</a>
        <Svg box="0 0 8 16" className={caret}><path d="M0 0l8 8-8 8z" /></Svg>
        <a href="#clip">Reeverb 2 - Vocal - Wet level</a>
        <Svg box="0 0 8 16" className={caret}><path d="M0 0l8 8-8 8z" /></Svg>
      </nav>
      <div className="mr-5 ml-auto flex items-center gap-[21px]">
        <button aria-label="Minimize" className="mb-2 h-1 w-3.5 bg-[#e3e8eb]" />
        <button aria-label="Maximize" className="mt-1 h-3.5 w-[18px] border-2 border-t-4 border-[#e3e8eb]" />
        <button aria-label="Close" className="mt-1">
          <Svg box="0 0 18 18" className="h-[18px] w-[18px]"><path d="M1 1l16 16M17 1L1 17" stroke="currentColor" strokeWidth="3.400" /></Svg>
        </button>
      </div>
    </header>
  );
}

export default function App() {
  return (
    <div className="flex h-screen overflow-hidden border-y-2 border-[#2a3033] bg-[#41494c] font-['Roboto',sans-serif]">
      <div className="flex w-4 shrink-0 flex-col justify-center gap-1 border-r border-[#2b3235] pl-1.5">
        {[0, 1, 2, 3, 4].map((i) => <i key={i} className="size-1 bg-[#2b3235]" />)}
      </div>
      <div className="flex min-w-0 flex-1 flex-col">
        <TitleBar />
        <div className="flex min-h-0 flex-1">
          <Sidebar />
          <main className="mr-3 mb-2.5 ml-3 flex min-w-0 flex-1 flex-col border-r-2 border-b-2 border-[#23292c]">
            <div className="flex h-[82px] shrink-0">
              <ArrangementTools />
              <div className="min-w-0 flex-1">
                <Overview />
                <Ruler />
              </div>
              <div className="flex w-10 shrink-0 flex-col gap-0.5 bg-[#23292c] pt-0.5 pl-px">
                <button aria-label="Options" className={`${scrollBtn} h-[38px]`}><span className="size-1 bg-[#1d2427]" /></button>
                <button aria-label="Scroll up" className={`${scrollBtn} h-[38px]`}><Chevron dir="up" /></button>
              </div>
            </div>
            <div className="flex min-h-0 flex-1">
              <TrackHeaders />
              <MarkerColumn />
              <Lanes />
              <div className={`flex w-10 shrink-0 flex-col border-l-2 border-[#23292c] ${hatch}`}>
                <div className={`${scrollBtn} h-[66px]`} />
                <button aria-label="Scroll down" className={`${scrollBtn} mt-auto h-[34px]`}><Chevron dir="down" /></button>
              </div>
            </div>
          </main>
        </div>
      </div>
    </div>
  );
}
